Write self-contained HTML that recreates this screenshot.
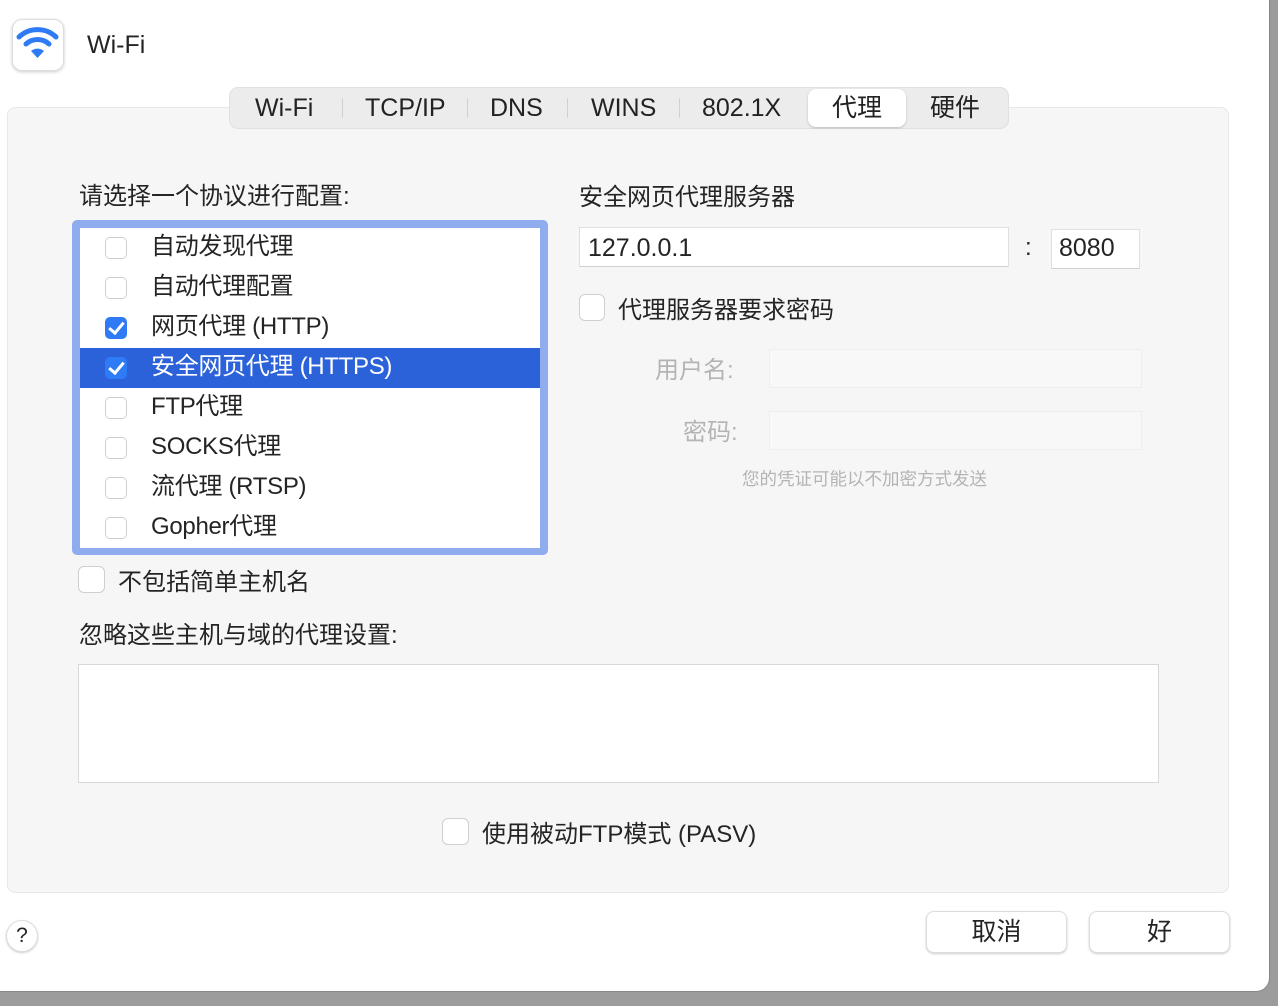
<!DOCTYPE html>
<html><head><meta charset="utf-8"><style>
*{margin:0;padding:0;box-sizing:border-box}
body{width:1278px;height:1006px;background:#9c9c9c;position:relative;overflow:hidden;font-family:"Liberation Sans","Noto Sans CJK SC",sans-serif;color:#242424}
.win{position:absolute;left:0;top:0;width:1270px;height:992px;background:#fff;border-bottom-right-radius:14px;border-right:1px solid #888;border-bottom:1px solid #888}
.a{position:absolute;white-space:nowrap}
.panel{position:absolute;left:7px;top:107px;width:1222px;height:786px;background:#f6f6f6;border:1px solid #e8e8e8;border-radius:8px}
.tabs{position:absolute;left:229px;top:87px;width:780px;height:42px;background:#ececec;border:1px solid #e0e0e0;border-radius:9px}
.tab{position:absolute;top:0;height:40px;line-height:40px;font-size:25px;color:#222}
.sep{position:absolute;top:10px;width:1px;height:20px;background:#d0d0d0}
.cb{position:absolute;width:22px;height:22px;border:1px solid #cfcfcf;border-radius:5px;background:#fff}
.cb.on{background:#2f7bf5;border-color:#2f7bf5}
.cb.on:after{content:"";position:absolute;left:6px;top:1px;width:6px;height:12px;border:solid #fff;border-width:0 3px 3px 0;transform:rotate(40deg)}
.row{position:absolute;left:0;width:460px;height:40px;font-size:24px;line-height:38px}
.row .cb{left:25px;top:9px}
.row span{position:absolute;left:71px;letter-spacing:-0.3px}
.field{position:absolute;background:#fff;border:1px solid #e0e0e0;border-bottom-color:#cfcfcf}
.btn{position:absolute;top:911px;width:141px;height:42px;background:#fff;border:1px solid #ddd;border-radius:8px;box-shadow:0 1px 2px rgba(0,0,0,.2);font-size:25px;text-align:center;line-height:40px}
</style></head><body>
<div class="win">
<div class="a" style="left:12px;top:19px;width:52px;height:52px;border-radius:10px;background:#fff;border:1px solid #ddd;box-shadow:0 1px 3px rgba(0,0,0,.2)">
<svg width="50" height="50" viewBox="0 0 50 50" style="position:absolute;left:0;top:0"><g fill="none" stroke="#2f7bf5" stroke-width="5" stroke-linecap="round"><path d="M6 17 A27 27 0 0 1 43 17"/><path d="M13 24 A17 17 0 0 1 36 24"/></g><path d="M18 31 A10 10 0 0 1 31 31 L24.5 38 Z" fill="#2f7bf5"/></svg></div>
<div class="a" style="left:87px;top:31px;font-size:25px">Wi-Fi</div>
<div class="panel"></div>
<div class="tabs">
<div class="tab" style="left:25px">Wi-Fi</div><div class="sep" style="left:112px"></div>
<div class="tab" style="left:135px">TCP/IP</div><div class="sep" style="left:237px"></div>
<div class="tab" style="left:260px">DNS</div><div class="sep" style="left:337px"></div>
<div class="tab" style="left:361px">WINS</div><div class="sep" style="left:449px"></div>
<div class="tab" style="left:472px">802.1X</div>
<div class="a" style="left:578px;top:1px;width:98px;height:38px;background:#fff;border-radius:8px;box-shadow:0 1px 2px rgba(0,0,0,.2)"></div>
<div class="tab" style="left:602px">代理</div>
<div class="tab" style="left:700px">硬件</div>
</div>
<div class="a" style="left:79px;top:176px;font-size:24px">请选择一个协议进行配置:</div>
<div class="a" style="left:72px;top:220px;width:476px;height:335px;border:4px solid #8fadee;border-radius:5px;background:#8fadee"></div>
<div class="a" style="left:80px;top:228px;width:460px;height:320px;background:#fff">
<div class="row" style="top:0"><div class="cb"></div><span>自动发现代理</span></div>
<div class="row" style="top:40px"><div class="cb"></div><span>自动代理配置</span></div>
<div class="row" style="top:80px"><div class="cb on"></div><span>网页代理 (HTTP)</span></div>
<div class="row" style="top:120px;background:#2b62d9;color:#fff"><div class="cb on"></div><span>安全网页代理 (HTTPS)</span></div>
<div class="row" style="top:160px"><div class="cb"></div><span>FTP代理</span></div>
<div class="row" style="top:200px"><div class="cb"></div><span>SOCKS代理</span></div>
<div class="row" style="top:240px"><div class="cb"></div><span>流代理 (RTSP)</span></div>
<div class="row" style="top:280px"><div class="cb"></div><span>Gopher代理</span></div>
</div>
<div class="a" style="left:579px;top:177px;font-size:24px">安全网页代理服务器</div>
<div class="field" style="left:579px;top:227px;width:430px;height:40px"></div>
<div class="a" style="left:588px;top:234px;font-size:25px">127.0.0.1</div>
<div class="a" style="left:1025px;top:234px;font-size:24px">:</div>
<div class="field" style="left:1051px;top:229px;width:89px;height:40px"></div>
<div class="a" style="left:1059px;top:234px;font-size:25px">8080</div>
<div class="cb" style="left:579px;top:294px;width:26px;height:27px;border-radius:6px"></div>
<div class="a" style="left:618px;top:290px;font-size:24px">代理服务器要求密码</div>
<div class="a" style="left:655px;top:350px;font-size:24px;color:#b4b4b4">用户名:</div>
<div class="field" style="left:769px;top:349px;width:373px;height:39px;background:#f8f8f8;border-color:#eee"></div>
<div class="a" style="left:683px;top:412px;font-size:24px;color:#b4b4b4">密码:</div>
<div class="field" style="left:769px;top:411px;width:373px;height:39px;background:#f8f8f8;border-color:#eee"></div>
<div class="a" style="left:742px;top:466px;font-size:17.5px;color:#b4b4b4">您的凭证可能以不加密方式发送</div>
<div class="cb" style="left:78px;top:566px;width:27px;height:27px;border-radius:6px"></div>
<div class="a" style="left:118px;top:562px;font-size:24px">不包括简单主机名</div>
<div class="a" style="left:79px;top:615px;font-size:24px">忽略这些主机与域的代理设置:</div>
<div class="field" style="left:78px;top:664px;width:1081px;height:119px;border-color:#d8d8d8"></div>
<div class="cb" style="left:442px;top:818px;width:27px;height:27px;border-radius:6px"></div>
<div class="a" style="left:482px;top:814px;font-size:24px">使用被动FTP模式 (PASV)</div>
<div class="a" style="left:6px;top:920px;width:32px;height:32px;border-radius:50%;background:#fff;border:1px solid #ddd;box-shadow:0 1px 2px rgba(0,0,0,.2);text-align:center;line-height:30px;font-size:21px">?</div>
<div class="btn" style="left:926px">取消</div>
<div class="btn" style="left:1089px">好</div>
</div>
</body></html>
